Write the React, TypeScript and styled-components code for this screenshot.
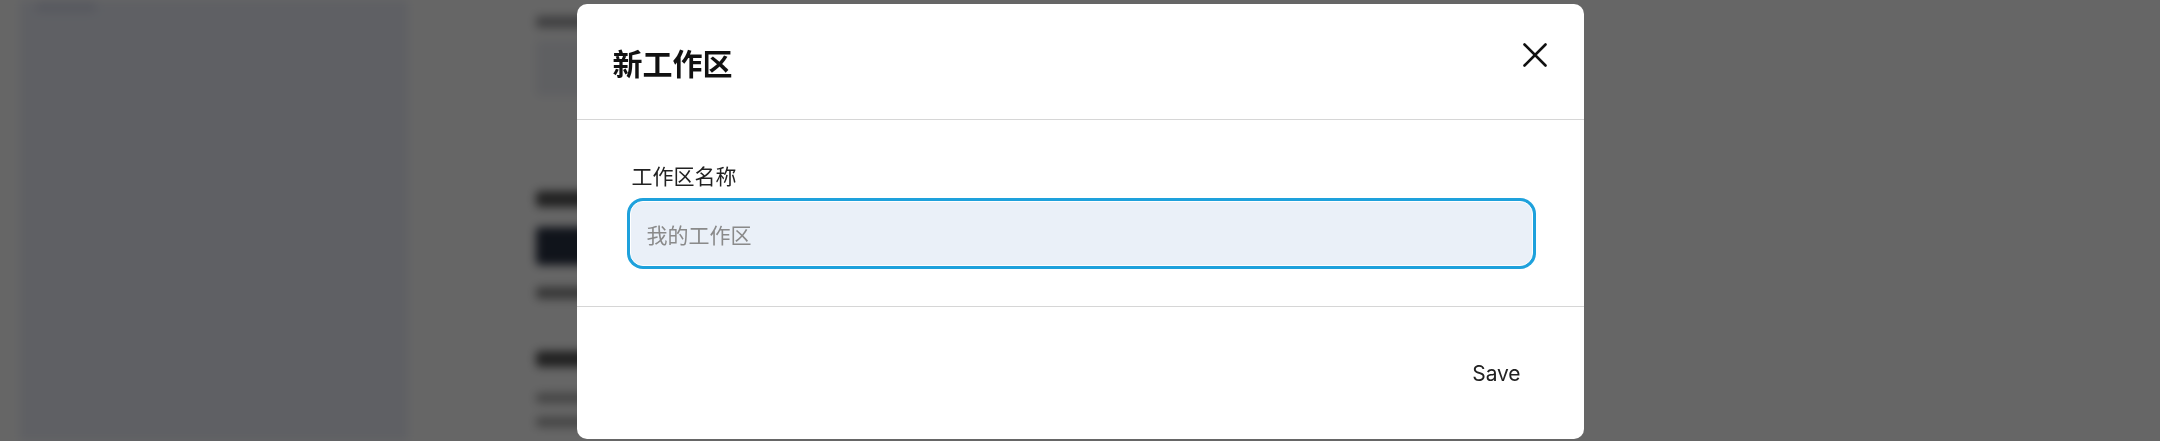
import React from "react";
import styled, { createGlobalStyle } from "styled-components";

const Global = createGlobalStyle`
  html, body { margin: 0; padding: 0; }
  body {
    width: 2160px;
    height: 441px;
    overflow: hidden;
    background: #ffffff;
    font-family: Inter, "Noto Sans", "Noto Sans CJK SC", sans-serif;
  }
  * { box-sizing: border-box; }
`;

const Page = styled.div`
  display: flex;
  height: 441px;
  background: #ffffff;
  filter: blur(5px);
`;

const Sidebar = styled.aside`
  margin-left: 20px;
  width: 388px;
  height: 100%;
  background: #edf0fa;
  padding: 2px 16px;
`;

const Main = styled.main`
  flex: 1;
  display: flex;
  flex-direction: column;
  padding: 16px 0 0 128px;
`;

const Bar = styled.div<{ $w: number; $h: number; $mt: number; $c: string }>`
  width: ${(p) => p.$w}px;
  height: ${(p) => p.$h}px;
  margin-top: ${(p) => p.$mt}px;
  background: ${(p) => p.$c};
  border-radius: 4px;
`;

const Overlay = styled.div`
  position: fixed;
  inset: 0;
  background: rgba(0, 0, 0, 0.6);
  display: flex;
  justify-content: center;
  align-items: flex-start;
  padding-top: 4px;
`;

const Modal = styled.div`
  width: 1007px;
  height: 435px;
  background: #ffffff;
  border-radius: 10px;
  display: flex;
  flex-direction: column;
  overflow: hidden;
`;

const Header = styled.header`
  height: 116px;
  display: flex;
  align-items: center;
  justify-content: space-between;
  padding: 0 37px 8px 36px;
  border-bottom: 1px solid #d6d6d6;
`;

const Title = styled.h2`
  margin: 0;
  font-family: "Noto Sans CJK SC", "Noto Sans", sans-serif;
  font-size: 30px;
  font-weight: 700;
  color: #111111;
  line-height: 1;
  padding-top: 8px;
`;

const CloseButton = styled.button`
  border: none;
  background: none;
  padding: 0;
  width: 24px;
  height: 24px;
  display: flex;
  cursor: pointer;
  margin-bottom: 6px;
`;

const Body = styled.section`
  height: 187px;
  padding: 40px 48px 0 50px;
  border-bottom: 1px solid #d6d6d6;
  display: flex;
  flex-direction: column;
`;

const Label = styled.label`
  font-family: "Noto Sans CJK SC", "Noto Sans", sans-serif;
  font-size: 21px;
  line-height: 30px;
  color: #222222;
  padding-left: 5px;
  margin-bottom: 8px;
`;

const Input = styled.input`
  height: 65px;
  margin: 3px;
  width: calc(100% - 6px);
  border: 1.5px solid #ffffff;
  border-radius: 13px;
  box-shadow: 0 0 0 3px #1ea1dc;
  background: #eaf0f8;
  outline: none;
  padding: 0 16px;
  font-family: "Noto Sans CJK SC", "Noto Sans", sans-serif;
  font-size: 21px;
  color: #222;
  &::placeholder {
    color: #8a8a8a;
  }
`;

const Footer = styled.footer`
  flex: 1;
  display: flex;
  align-items: center;
  justify-content: flex-end;
  padding: 0 47px 0 0;
`;

const SaveButton = styled.button`
  border: none;
  background: none;
  padding: 8px 16px;
  font-family: Inter, "Noto Sans", sans-serif;
  font-size: 21px;
  font-weight: 400;
  color: #222222;
  letter-spacing: -0.1px;
  cursor: pointer;
`;

export default function App() {
  return (
    <>
      <Global />
      <Page>
        <Sidebar>
          <Bar $w={60} $h={10} $mt={0} $c="#dadeee" />
        </Sidebar>
        <Main>
          <Bar $w={300} $h={12} $mt={0} $c="#a0a0a4" />
          <Bar $w={300} $h={56} $mt={12} $c="#eef0f6" />
          <Bar $w={200} $h={16} $mt={95} $c="#555" />
          <Bar $w={200} $h={38} $mt={20} $c="#2a3244" />
          <Bar $w={80} $h={12} $mt={22} $c="#8a8a8a" />
          <Bar $w={200} $h={16} $mt={52} $c="#555" />
          <Bar $w={300} $h={10} $mt={26} $c="#aaa" />
          <Bar $w={300} $h={10} $mt={14} $c="#aaa" />
        </Main>
      </Page>
      <Overlay>
        <Modal role="dialog" aria-label="新工作区">
          <Header>
            <Title>新工作区</Title>
            <CloseButton aria-label="Close">
              <svg width="24" height="24" viewBox="0 0 24 24" fill="none">
                <path
                  d="M1.5 1.5 L22.5 22.5 M22.5 1.5 L1.5 22.5"
                  stroke="#111"
                  strokeWidth="2.6"
                  strokeLinecap="round"
                />
              </svg>
            </CloseButton>
          </Header>
          <Body>
            <Label htmlFor="ws">工作区名称</Label>
            <Input id="ws" placeholder="我的工作区" />
          </Body>
          <Footer>
            <SaveButton>Save</SaveButton>
          </Footer>
        </Modal>
      </Overlay>
    </>
  );
}
